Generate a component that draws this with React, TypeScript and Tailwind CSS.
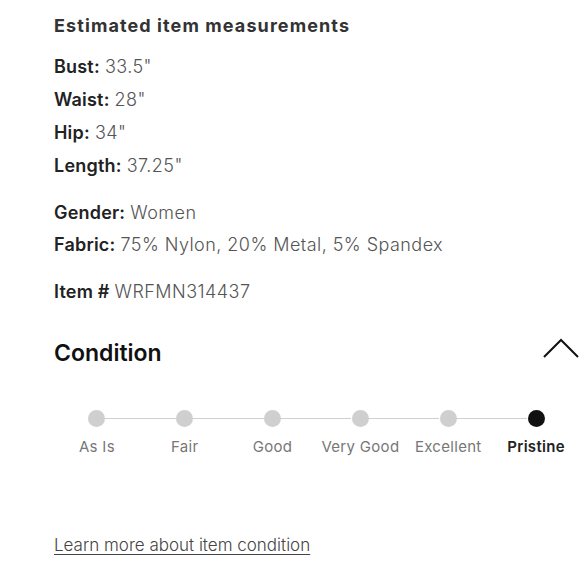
import React from "react";

const steps = ["As Is", "Fair", "Good", "Very Good", "Excellent", "Pristine"];

function Row({ label, value, h = "h-[33px]" }: { label: string; value: string; h?: string }) {
  return (
    <div className={h + " flex items-center text-[18px]"}>
      <span className="font-semibold text-[#222] tracking-[0.2px]">{label}</span>
      <span className="ml-[5px] font-light text-[#555] tracking-[0.45px]">{value}</span>
    </div>
  );
}

export default function App() {
  return (
    <div
      className="w-[580px] h-[580px] bg-white overflow-hidden pl-[54px]"
      style={{ fontFamily: "Inter, 'Noto Sans', sans-serif" }}
    >
      <div className="pt-[12px] h-[38px] flex items-center text-[18px] font-bold text-[#333] tracking-[1.1px]">
        Estimated item measurements
      </div>
      <div className="mt-[12px]">
        <Row label="Bust:" value={'33.5"'} />
        <Row label="Waist:" value={'28"'} />
        <Row label="Hip:" value={'34"'} />
        <Row label="Length:" value={'37.25"'} />
      </div>
      <div className="mt-[14px]">
        <Row label="Gender:" value="Women" h="h-[32px]" />
        <Row label="Fabric:" value="75% Nylon, 20% Metal, 5% Spandex" h="h-[32px]" />
      </div>
      <div className="mt-[15px]">
        <Row label="Item #" value="WRFMN314437" />
      </div>
      <div className="mt-[28px] h-[34px] flex items-center justify-between">
        <span className="text-[23px] font-semibold text-[#111]">Condition</span>
        <svg width="38" height="22" viewBox="0 0 38 22" className="-mt-[8px]">
          <polyline points="2,19 19,2 36,19" fill="none" stroke="#111" strokeWidth="2" />
        </svg>
      </div>
      <div className="mt-[40px] -ml-[1px] grid grid-cols-6">
        {steps.map((s, i) => (
          <div key={s} className="relative flex flex-col items-center">
            {i > 0 && (
              <div className="absolute top-[8px] right-1/2 w-[71px] mr-[9px] h-px bg-[#cfcfcf]" />
            )}
            <div
              className={
                "w-[17px] h-[17px] rounded-full " +
                (i === 5 ? "bg-[#111]" : "bg-[#cfcfcf]")
              }
            />
            <div
              className={
                "mt-[9px] text-[15px] tracking-[0.3px] " +
                (i === 5 ? "font-semibold text-[#222]" : "text-[#777]")
              }
            >
              {s}
            </div>
          </div>
        ))}
      </div>
      <div className="mt-[74px] text-[17px] font-light text-[#444] underline underline-offset-[3px]">
        Learn more about item condition
      </div>
    </div>
  );
}
